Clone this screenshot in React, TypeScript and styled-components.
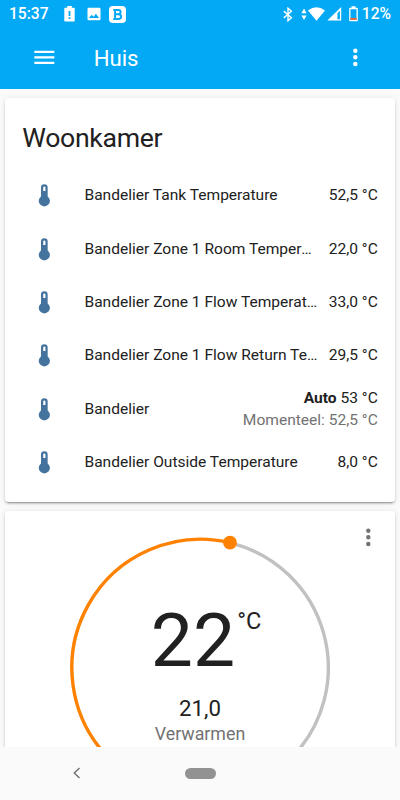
import React from "react";
import styled, { createGlobalStyle } from "styled-components";

const GlobalStyle = createGlobalStyle`
  * { box-sizing: border-box; }
  body { margin: 0; background: #fafafa; }
`;

const Screen = styled.div`
  width: 400px;
  height: 800px;
  display: flex;
  flex-direction: column;
  overflow: hidden;
  background: #fafafa;
  color: #212121;
  font-family: Roboto, "Noto Sans", sans-serif;
`;

const Header = styled.header`
  flex: none;
  height: 88.9px;
  background: #03a9f4;
  color: #fff;
`;

const StatusBar = styled.div`
  height: 27px;
  display: flex;
  align-items: center;
  justify-content: space-between;
  padding: 1px 9px 0;
  font-size: 15.6px;
  font-weight: 500;
  line-height: 26px;
`;

const StatusGroup = styled.div`
  display: flex;
  align-items: center;
`;

const Glyph = styled.svg<{ $gap?: number }>`
  flex: none;
  display: block;
  margin-left: ${(p) => p.$gap ?? 0}px;
  fill: currentColor;
`;

const Battery = styled.span`
  margin-left: 4px;
`;

const Toolbar = styled.div`
  height: 61px;
  display: flex;
  align-items: center;
  padding: 0 31px;
`;

const ToolbarTitle = styled.h1`
  flex: 1;
  margin: 0 0 0 36px;
  font-size: 22.2px;
  font-weight: 400;
  line-height: 28px;
`;

const View = styled.main`
  flex: 1;
  min-height: 0;
  overflow: hidden;
  display: flex;
  flex-direction: column;
  gap: 8.9px;
  padding: 8.9px 5px 0;
`;

const Card = styled.section`
  flex: none;
  background: #fff;
  border-radius: 4px;
  box-shadow: 0 2px 2px rgba(0, 0, 0, 0.14), 0 1px 5px rgba(0, 0, 0, 0.12),
    0 3px 1px -2px rgba(0, 0, 0, 0.2);
`;

const EntitiesCard = styled(Card)`
  height: 404.5px;
  padding: 0 17.24px;
`;

const CardTitle = styled.h2`
  height: 75.6px;
  margin: 0;
  padding-top: 20px;
  font-size: 26.67px;
  font-weight: 400;
  line-height: 40px;
  letter-spacing: -0.32px;
`;

const EntityList = styled.div`
  display: flex;
  flex-direction: column;
  gap: 8.89px;
`;

const EntityRow = styled.div`
  height: 44.44px;
  display: flex;
  align-items: center;
  font-size: 15.56px;
  line-height: 22.2px;
`;

const IconCell = styled.div`
  flex: none;
  width: 44.44px;
  display: flex;
  justify-content: center;
  color: #44739e;
`;

const EntityName = styled.div`
  flex: 1;
  min-width: 0;
  margin: 0 8.9px 0 17.8px;
  overflow: hidden;
  white-space: nowrap;
  text-overflow: ellipsis;
`;

const EntityState = styled.div`
  flex: none;
  text-align: right;
  white-space: nowrap;
`;

const Secondary = styled.div`
  color: #727272;
`;

const ThermostatCard = styled(Card)`
  position: relative;
  height: 330px;
  display: flex;
  justify-content: center;
  padding-top: 22px;
`;

const CardMenu = styled.div`
  position: absolute;
  top: 13.3px;
  right: 13px;
  color: #727272;
`;

const Dial = styled.div`
  display: grid;
  width: 270px;
  height: 270px;
  > * {
    grid-area: 1 / 1;
  }
`;

const Readout = styled.div`
  display: flex;
  flex-direction: column;
  align-items: center;
  padding-top: 63px;
`;

const Temperature = styled.div`
  position: relative;
  margin-right: 14px;
  font-size: 75px;
  font-weight: 400;
  line-height: 88px;
`;

const Unit = styled.span`
  position: absolute;
  top: 11px;
  left: calc(100% + 2px);
  font-size: 23.5px;
  line-height: 28px;
`;

const Target = styled.div`
  margin-top: 11px;
  font-size: 22.2px;
  line-height: 26px;
`;

const Mode = styled.div`
  font-size: 17.8px;
  line-height: 26px;
  color: #727272;
`;

const NavBar = styled.nav`
  position: relative;
  flex: none;
  height: 53.3px;
  display: grid;
  grid-template-columns: 1fr auto 1fr;
  align-items: center;
  background: #fafafa;
  color: #757575;
`;

const HomePill = styled.div`
  width: 31px;
  height: 11px;
  border-radius: 6px;
  background: #929292;
`;

const Dots = () => (
  <Glyph width="26.67" height="26.67" viewBox="0 0 24 24">
    <path d="M12 16a2 2 0 1 1 0 4 2 2 0 0 1 0-4m0-6a2 2 0 1 1 0 4 2 2 0 0 1 0-4m0-6a2 2 0 1 1 0 4 2 2 0 0 1 0-4Z" />
  </Glyph>
);

const Thermometer = () => (
  <Glyph width="26.67" height="26.67" viewBox="0 0 24 24">
    <path d="M15 13V5A3 3 0 0 0 9 5V13A5 5 0 1 0 15 13M12 4A1 1 0 0 1 13 5V8H11V5A1 1 0 0 1 12 4Z" />
  </Glyph>
);

type Entity = { name: string; state: string; mode?: string; current?: string };

const entities: Entity[] = [
  { name: "Bandelier Tank Temperature", state: "52,5 °C" },
  { name: "Bandelier Zone 1 Room Temperature", state: "22,0 °C" },
  { name: "Bandelier Zone 1 Flow Temperature", state: "33,0 °C" },
  { name: "Bandelier Zone 1 Flow Return Temperature", state: "29,5 °C" },
  { name: "Bandelier", state: "53 °C", mode: "Auto", current: "Momenteel: 52,5 °C" },
  { name: "Bandelier Outside Temperature", state: "8,0 °C" },
];

export default function App() {
  return (
    <Screen>
      <GlobalStyle />
      <Header>
        <StatusBar>
          <StatusGroup>
            <span>15:37</span>
            <Glyph $gap={15} width="11" height="16" viewBox="0 0 11 16">
              <path
                fillRule="evenodd"
                d="M3.2 0h4.6v1.7H10q.7 0 .7.7v12.4q0 .7-.7.7H1q-.7 0-.7-.7V2.4q0-.7.7-.7h2.2ZM4.6 5v5h1.8V5Zm0 6.3v1.7h1.8v-1.7Z"
              />
            </Glyph>
            <Glyph $gap={12} width="14" height="14" viewBox="0 0 14 14">
              <path
                fillRule="evenodd"
                d="M1.8.7h10.4q1.3 0 1.3 1.3v9.9q0 1.3-1.3 1.3H1.8Q.5 13.2.5 11.9V2Q.5.7 1.8.7ZM2 11h10L8.9 6.7 6.4 9.8 4.6 7.7Z"
              />
            </Glyph>
            <Glyph $gap={8.5} width="17" height="17" viewBox="0 0 17 17">
              <rect width="17" height="17" rx="4" />
              <path
                d="M4.3 4H9.3Q11.6 4 11.6 6.1 11.6 8 9.6 8.2 12.2 8.5 12.2 10.6 12.2 13 9.3 13H4.3M6.1 4v9M6 8.3h3.6"
                fill="none"
                stroke="#03a9f4"
                strokeWidth="1.9"
              />
            </Glyph>
          </StatusGroup>
          <StatusGroup>
            <Glyph width="10" height="15" viewBox="0 0 10 15">
              <path
                d="M.8 4.1 8.4 10.7 5 13.7V1.2l3.4 3L.8 10.9"
                fill="none"
                stroke="currentColor"
                strokeWidth="1.4"
              />
            </Glyph>
            <Glyph $gap={7.5} width="6" height="13" viewBox="0 0 6 13">
              <path d="M3 .6 5.6 5.3H.4ZM.4 7.4h5.2L3 12.1Z" />
            </Glyph>
            <Glyph $gap={1.5} width="17" height="14" viewBox="0 0 17 14">
              <path d="M0 3.5Q8.5-3 17 3.5L8.5 13.8Z" />
            </Glyph>
            <Glyph $gap={1.5} width="15" height="14" viewBox="0 0 15 14">
              <path fillRule="evenodd" d="M14.2 0v13.5H.3ZM10.4 6.2v6h2.5V3.8Z" />
            </Glyph>
            <Glyph $gap={7} width="9" height="16" viewBox="0 0 9 16">
              <path
                fillRule="evenodd"
                d="M2.5.3h4v1.5H8q.8 0 .8.8v11.9q0 .8-.8.8H1q-.8 0-.8-.8V2.600q0-.8.8-.8h1.500ZM1.500 3.200v10.800h6V3.200Z"
              />
              <path d="M1.300 12h6.400v1.900H1.300Z" fill="#f4693c" />
            </Glyph>
            <Battery>12%</Battery>
          </StatusGroup>
        </StatusBar>
        <Toolbar>
          <Glyph width="26.67" height="26.67" viewBox="0 0 24 24">
            <path d="M3 6h18v2H3zM3 11h18v2H3zM3 16h18v2H3z" />
          </Glyph>
          <ToolbarTitle>Huis</ToolbarTitle>
          <Dots />
        </Toolbar>
      </Header>

      <View>
        <EntitiesCard>
          <CardTitle>Woonkamer</CardTitle>
          <EntityList>
            {entities.map((e) => (
              <EntityRow key={e.name}>
                <IconCell>
                  <Thermometer />
                </IconCell>
                <EntityName>{e.name}</EntityName>
                <EntityState>
                  <div>
                    {e.mode && <b>{e.mode} </b>}
                    {e.state}
                  </div>
                  {e.current && <Secondary>{e.current}</Secondary>}
                </EntityState>
              </EntityRow>
            ))}
          </EntityList>
        </EntitiesCard>

        <ThermostatCard>
          <CardMenu>
            <Dots />
          </CardMenu>
          <Dial>
            <svg width="270" height="270" viewBox="0 0 270 270">
              <g fill="none" strokeWidth="3.4" strokeLinecap="round">
                <path
                  d="M165.3 9.8A128.6 128.6 0 0 1 225.9 225.4"
                  stroke="#c1c1c1"
                />
                <path
                  d="M44.1 225.4A128.6 128.6 0 0 1 165.3 9.8"
                  stroke="#ff8100"
                />
              </g>
              <circle cx="165" cy="9.7" r="6.9" fill="#ff8100" />
            </svg>
            <Readout>
              <Temperature>
                22<Unit>°C</Unit>
              </Temperature>
              <Target>21,0</Target>
              <Mode>Verwarmen</Mode>
            </Readout>
          </Dial>
        </ThermostatCard>
      </View>

      <NavBar>
        <Glyph $gap={70} width="12" height="14" viewBox="0 0 12 14">
          <path d="M9.5 2 4.3 7l5.2 5" fill="none" stroke="currentColor" strokeWidth="1.5" />
        </Glyph>
        <HomePill />
      </NavBar>
    </Screen>
  );
}
